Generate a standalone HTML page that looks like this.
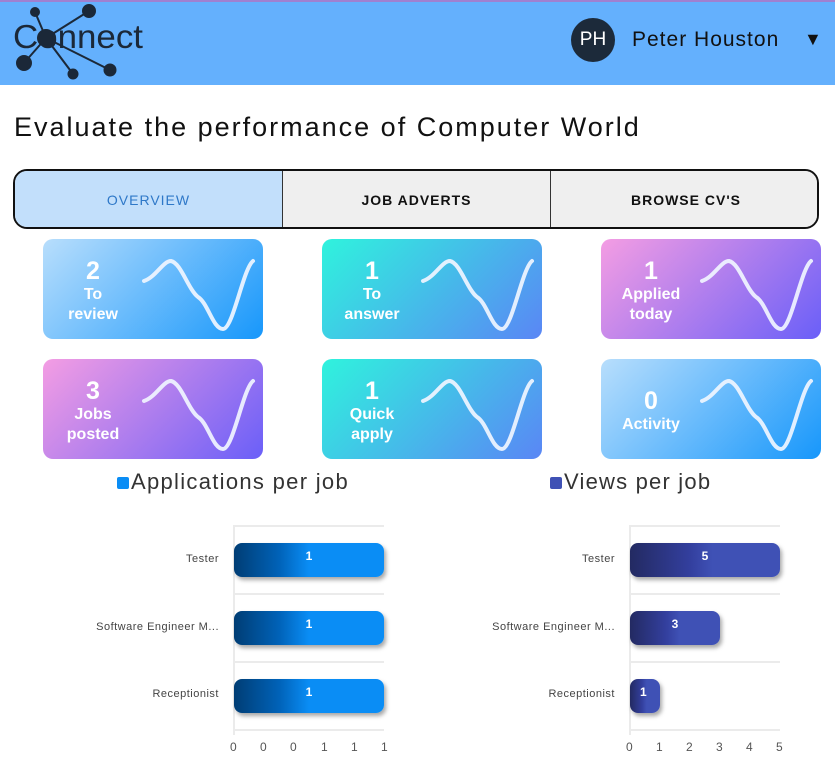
<!DOCTYPE html>
<html><head><meta charset="utf-8"><style>
*{margin:0;padding:0;box-sizing:border-box}
body{width:835px;height:765px;position:relative;background:#fff;font-family:"Liberation Sans",sans-serif;overflow:hidden;color:#111}
.hdr{position:absolute;left:0;top:0;width:835px;height:85px;background:#64b0fd;border-top:2px solid #a080d0}
.abs{position:absolute}
.card{position:absolute;width:220px;height:100px;border-radius:10px;color:#fff;font-weight:bold;overflow:hidden}
.card .t{position:absolute;left:0;width:100px;text-align:center;font-size:16px;line-height:20px}
.card .n{font-size:25px;line-height:28px}
.g1{background:linear-gradient(135deg,#b8defc,#1797fb)}
.g2{background:linear-gradient(135deg,#2ff3dd,#5a86f5)}
.g3{background:linear-gradient(135deg,#f49de3,#6a5ff8)}
.tab{position:absolute;top:170px;height:58px;font-size:14px;font-weight:bold;letter-spacing:1px;text-align:center;line-height:58px;background:#efefef;color:#111}
.bar{position:absolute;height:34px;border-radius:8px;color:#fff;font-weight:bold;font-size:12px;text-align:center;line-height:26px;box-shadow:2px 3px 4px rgba(0,0,0,.35)}
.b1{background:linear-gradient(90deg,#003d74,#0062b8 30%,#0a8df5 50%,#0a8df5)}
.b2{background:linear-gradient(90deg,#232a62,#333f9e 40%,#3f51b5 55%,#3f51b5)}
.lbl{position:absolute;font-size:11px;color:#444;text-align:right;width:160px;letter-spacing:0.5px}
.gl{position:absolute;height:2px;background:#ebebeb}
.tk{position:absolute;font-size:12px;color:#555;top:740px}
</style></head><body>
<div class="hdr"></div>
<svg class="abs" style="left:0;top:0" width="160" height="85">
<g stroke="#1b2838" stroke-width="2" fill="#1b2838">
<line x1="35" y1="12" x2="46" y2="38"/><line x1="46" y1="38" x2="89" y2="11"/><line x1="46" y1="38" x2="24" y2="63"/><line x1="46" y1="38" x2="73" y2="74"/><line x1="46" y1="38" x2="110" y2="70"/>
<circle cx="35" cy="12" r="4"/><circle cx="89" cy="11" r="6"/><circle cx="24" cy="63" r="7"/><circle cx="73" cy="74" r="4.5"/><circle cx="110" cy="70" r="5.5"/><circle cx="46" cy="38" r="8"/>
</g>
<text x="13" y="48" font-family="Liberation Sans" font-size="33" fill="#1b2838" textLength="130" lengthAdjust="spacingAndGlyphs">Connect</text>
</svg>
<div class="abs" style="left:571px;top:18px;width:44px;height:44px;border-radius:50%;background:#1c2a3a;color:#fff;font-size:19px;text-align:center;line-height:44px">PH</div>
<div class="abs" style="left:632px;top:28px;font-size:21px;color:#111;letter-spacing:1px">Peter Houston</div>
<div class="abs" style="left:804px;top:29px;font-size:18px;color:#111">▼</div>
<div class="abs" style="left:14px;top:112px;font-size:27px;color:#111;letter-spacing:2px">Evaluate the performance of Computer World</div>
<div class="abs" style="left:13px;top:169px;width:806px;height:60px;border:2px solid #111;border-radius:14px;overflow:hidden;background:#efefef">
<div class="tab" style="left:0;top:0;width:267px;background:#c2dffb;color:#2e78c8;font-weight:normal">OVERVIEW</div>
<div class="tab" style="left:267px;top:0;width:269px;border-left:1px solid #333;border-right:1px solid #333">JOB ADVERTS</div>
<div class="tab" style="left:536px;top:0;width:270px">BROWSE CV'S</div>
</div>
<div class="card g1" style="left:43px;top:239px"><div class="t" style="top:18px"><div class="n">2</div>To<br>review</div></div>
<div class="card g2" style="left:322px;top:239px"><div class="t" style="top:18px"><div class="n">1</div>To<br>answer</div></div>
<div class="card g3" style="left:601px;top:239px"><div class="t" style="top:18px"><div class="n">1</div>Applied<br>today</div></div>
<div class="card g3" style="left:43px;top:359px"><div class="t" style="top:18px"><div class="n">3</div>Jobs<br>posted</div></div>
<div class="card g2" style="left:322px;top:359px"><div class="t" style="top:18px"><div class="n">1</div>Quick<br>apply</div></div>
<div class="card g1" style="left:601px;top:359px"><div class="t" style="top:28px"><div class="n">0</div>Activity</div></div>
<svg class="abs" style="left:0;top:0" width="835" height="470">
<defs><path id="w" d="M101 42 C113 38 120 22 128 22 C138 24 145 50 155 58 C165 64 170 90 180 90 C190 90 200 30 210 22" fill="none" stroke="rgba(240,245,255,.92)" stroke-width="4" stroke-linecap="round"/></defs>
<use href="#w" x="43" y="239"/><use href="#w" x="322" y="239"/><use href="#w" x="601" y="239"/>
<use href="#w" x="43" y="359"/><use href="#w" x="322" y="359"/><use href="#w" x="601" y="359"/>
</svg>
<div class="abs" style="left:117px;top:477px;width:12px;height:12px;background:#0a8df5;border-radius:2px"></div>
<div class="abs" style="left:131px;top:469px;font-size:22px;color:#333;letter-spacing:1.3px">Applications per job</div>
<div class="abs" style="left:550px;top:477px;width:12px;height:12px;background:#3f51b5;border-radius:2px"></div>
<div class="abs" style="left:564px;top:469px;font-size:22px;color:#333;letter-spacing:1.2px">Views per job</div>
<div class="gl" style="left:234px;top:525px;width:150px"></div>
<div class="gl" style="left:234px;top:593px;width:150px"></div>
<div class="gl" style="left:234px;top:661px;width:150px"></div>
<div class="gl" style="left:234px;top:729px;width:150px"></div>
<div class="abs" style="left:233px;top:525px;width:2px;height:210px;background:#ebebeb"></div>
<div class="bar b1" style="left:234px;top:543px;width:150px">1</div>
<div class="bar b1" style="left:234px;top:611px;width:150px">1</div>
<div class="bar b1" style="left:234px;top:679px;width:150px">1</div>
<div class="lbl" style="left:59px;top:553px">Tester</div>
<div class="lbl" style="left:59px;top:621px">Software Engineer M...</div>
<div class="lbl" style="left:59px;top:688px">Receptionist</div>
<div class="tk" style="left:230px">0</div><div class="tk" style="left:260px">0</div><div class="tk" style="left:290px">0</div><div class="tk" style="left:321px">1</div><div class="tk" style="left:351px">1</div><div class="tk" style="left:381px">1</div>
<div class="gl" style="left:630px;top:525px;width:150px"></div>
<div class="gl" style="left:630px;top:593px;width:150px"></div>
<div class="gl" style="left:630px;top:661px;width:150px"></div>
<div class="gl" style="left:630px;top:729px;width:150px"></div>
<div class="abs" style="left:629px;top:525px;width:2px;height:210px;background:#ebebeb"></div>
<div class="bar b2" style="left:630px;top:543px;width:150px">5</div>
<div class="bar b2" style="left:630px;top:611px;width:90px">3</div>
<div class="bar b2" style="left:630px;top:679px;width:30px;text-align:left;padding-left:10px">1</div>
<div class="lbl" style="left:455px;top:553px">Tester</div>
<div class="lbl" style="left:455px;top:621px">Software Engineer M...</div>
<div class="lbl" style="left:455px;top:688px">Receptionist</div>
<div class="tk" style="left:626px">0</div><div class="tk" style="left:656px">1</div><div class="tk" style="left:686px">2</div><div class="tk" style="left:716px">3</div><div class="tk" style="left:746px">4</div><div class="tk" style="left:776px">5</div>
</body></html>
